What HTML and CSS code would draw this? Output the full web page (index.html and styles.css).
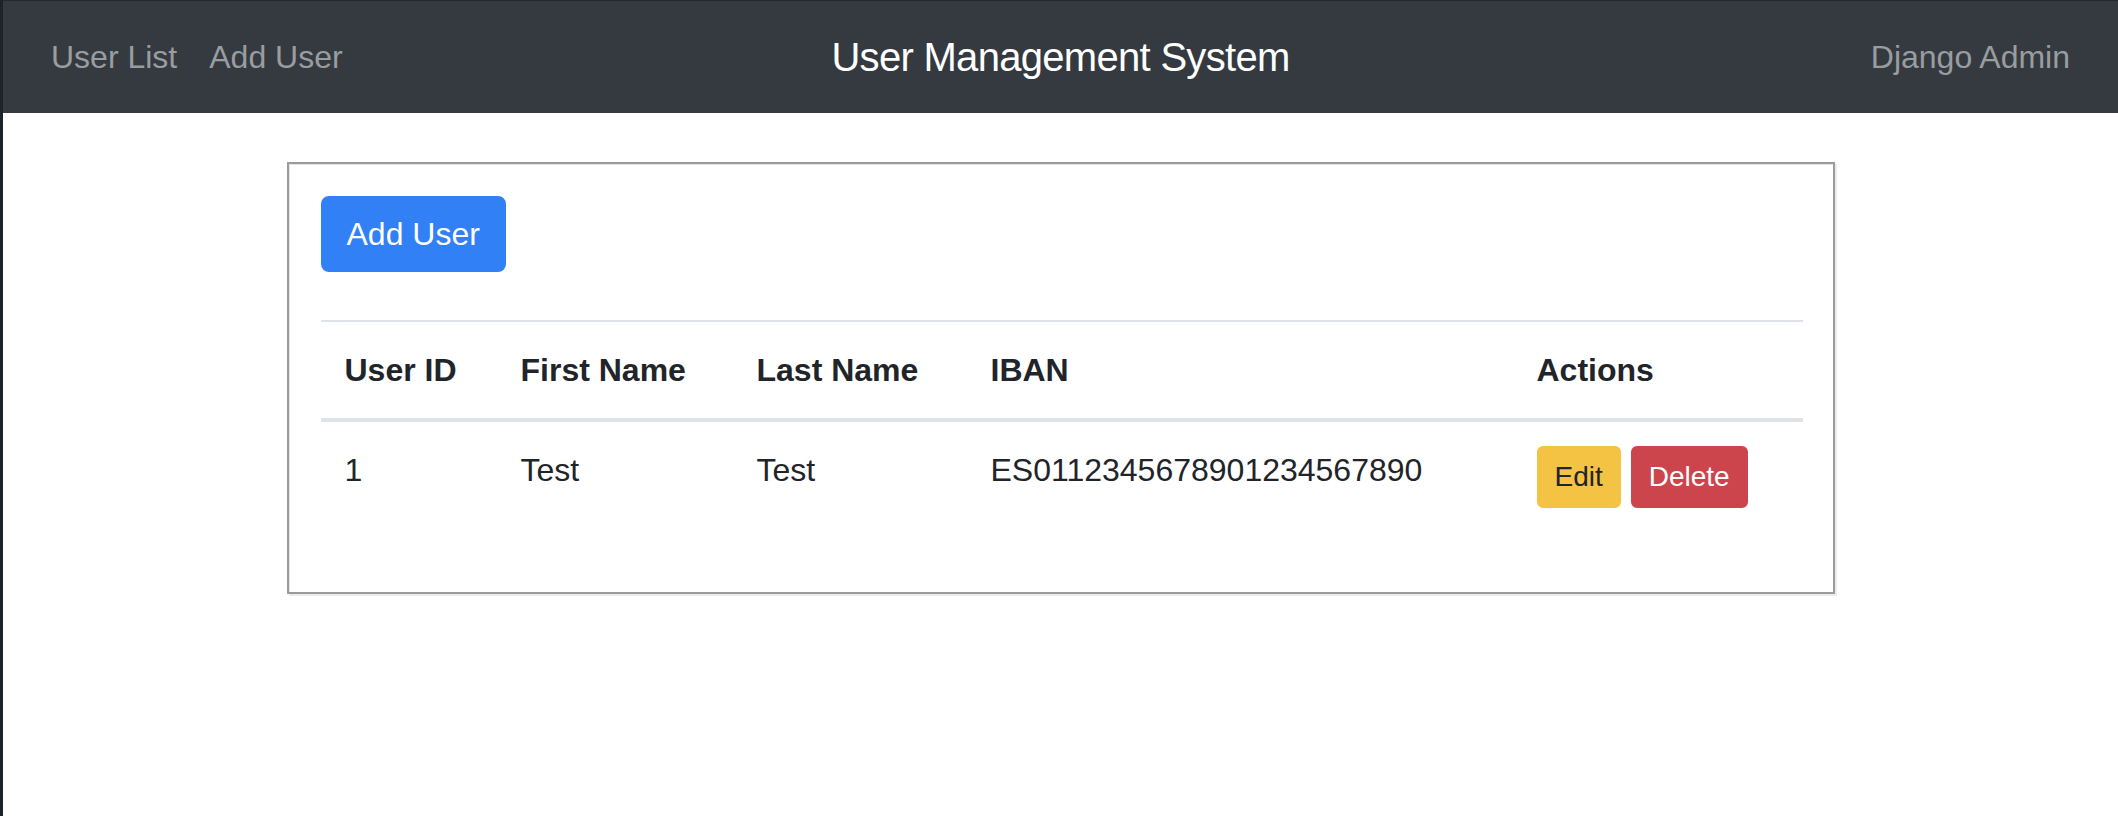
FILE: index.html
```html
<!DOCTYPE html>
<html lang="en">
<head>
<meta charset="utf-8">
<title>User Management System</title>
<link rel="stylesheet" href="styles.css">
</head>
<body>
<nav class="navbar">
  <ul class="nav nav-left">
    <li><a class="nav-link" href="#">User List</a></li>
    <li><a class="nav-link" href="#">Add User</a></li>
  </ul>
  <a class="brand" href="#">User Management System</a>
  <ul class="nav nav-right">
    <li><a class="nav-link" href="#">Django Admin</a></li>
  </ul>
</nav>
<main class="card">
  <a class="btn btn-primary" href="#">Add User</a>
  <table class="table">
    <colgroup>
      <col class="c-id">
      <col class="c-first">
      <col class="c-last">
      <col class="c-iban">
      <col class="c-actions">
    </colgroup>
    <thead>
      <tr>
        <th>User ID</th>
        <th>First Name</th>
        <th>Last Name</th>
        <th>IBAN</th>
        <th>Actions</th>
      </tr>
    </thead>
    <tbody>
      <tr>
        <td>1</td>
        <td>Test</td>
        <td>Test</td>
        <td>ES0112345678901234567890</td>
        <td>
          <div class="actions">
            <a class="btn-sm btn-warning" href="#">Edit</a>
            <a class="btn-sm btn-danger" href="#">Delete</a>
          </div>
        </td>
      </tr>
    </tbody>
  </table>
</main>
</body>
</html>
```

FILE: styles.css
```css
html, body {
  margin: 0;
  padding: 0;
}
body {
  min-height: 100vh;
  box-sizing: border-box;
  border-left: 3px solid #1d232b;
  background: #ffffff;
  font-family: "Liberation Sans", Arial, sans-serif;
  color: #212529;
}
a {
  text-decoration: none;
}
.navbar {
  display: grid;
  grid-template-columns: 1fr auto 1fr;
  align-items: center;
  background: #343a40;
  border-top: 1px solid #24282c;
  padding: 16px 32px;
}
.nav {
  list-style: none;
  margin: 0;
  padding: 0;
  display: flex;
}
.nav-right {
  justify-content: flex-end;
}
.nav-link {
  display: block;
  padding: 16px;
  font-size: 32px;
  line-height: 48px;
  color: #9a9da0;
}
.brand {
  display: block;
  font-size: 40px;
  line-height: 60px;
  padding: 10px 0;
  color: #ffffff;
  letter-spacing: -0.7px;
}
.card {
  display: block;
  box-sizing: border-box;
  width: 1548px;
  margin: 49px auto 0;
  padding: 32px 30px 32px 32px;
  border: 2px solid #9b9b9b;
  box-shadow: inset 1px 1px 0 #e4e4e4, 2px 2px 0 #ececec;
}
.btn {
  display: inline-block;
  font-size: 32px;
  line-height: 48px;
  padding: 12px 24px;
  border: 2px solid transparent;
  border-radius: 8px;
  margin-bottom: 48px;
}
.btn-primary {
  background: #3280f6;
  border-color: #3280f6;
  color: #ffffff;
}
.table {
  width: 100%;
  table-layout: fixed;
  border-spacing: 0;
  font-size: 32px;
  line-height: 48px;
  color: #212529;
  margin-bottom: 28px;
}
.c-id { width: 176px; }
.c-first { width: 236px; }
.c-last { width: 234px; }
.c-iban { width: 546px; }
.table th {
  text-align: left;
  font-weight: 700;
  padding: 24px;
  border-top: 2px solid #dfe2e6;
  border-bottom: 4px solid #dfe2e6;
}
.table td {
  padding: 24px;
  vertical-align: top;
}
.actions {
  display: flex;
  gap: 10px;
}
.btn-sm {
  display: inline-block;
  font-size: 28px;
  line-height: 42px;
  padding: 8px 16px;
  border: 2px solid transparent;
  border-radius: 6px;
}
.btn-warning {
  background: #f5c344;
  border-color: #f5c344;
  color: #212529;
}
.btn-danger {
  background: #cc454c;
  border-color: #cc454c;
  color: #ffffff;
}
```
